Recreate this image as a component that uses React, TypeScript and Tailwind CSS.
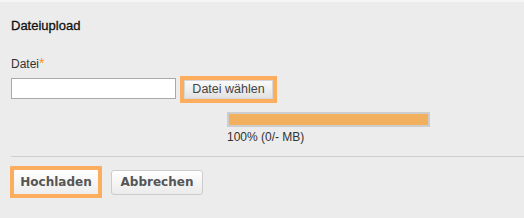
import React from "react";

export default function App() {
  return (
    <div className="w-[524px] h-[218px] bg-[#ececec] overflow-hidden font-['Liberation_Sans',Arial,sans-serif] text-[#333]">
      <div className="h-[2px] bg-[#f5f5f5]" />
      <div className="pl-[11px] pt-[17px]">
        <h2 className="text-[13px] leading-[14px] text-[#111] [-webkit-text-stroke:0.3px_#111]">Dateiupload</h2>
        <div className="mt-[24px] text-[12px] leading-[14px] text-[#333] flex items-start">
          <span>Datei</span>
          <span className="text-[#f7941d] text-[14px] leading-[12px]">*</span>
        </div>
        <div className="mt-[5px] flex items-start">
          <input
            type="text"
            className="mt-[2px] w-[165px] h-[21px] border border-[#a9a9a9] bg-white outline-none"
          />
          <div className="ml-[4px] border-[4px] border-[#fdad5e]">
            <button className="block w-[89px] h-[19px] border border-[#d6d6d6] bg-gradient-to-b from-[#fafafa] to-[#e2e2e2] text-[12.5px] leading-[17px] text-[#444]">
              Datei wählen
            </button>
          </div>
        </div>
        <div className="mt-[9px] ml-[216px] w-[203px] h-[15px] border-[2px] border-[#cdcdcd] bg-[#f2b05f]" />
        <div className="mt-[3px] ml-[216px] text-[12px] leading-[14px] text-[#333]">100% (0/- MB)</div>
      </div>
      <div className="mt-[12px] ml-[11px] h-px bg-[#cfcfcf]" />
      <div className="mt-[9px] ml-[10px] flex items-center">
        <div className="border-[4px] border-[#fdad5e]">
          <button className="block w-[84px] h-[24px] bg-gradient-to-b from-[#ffffff] to-[#ededed] font-['DejaVu_Sans',Verdana,sans-serif] font-bold text-[12px] leading-[24px] text-[#555]">
            Hochladen
          </button>
        </div>
        <button className="ml-[9px] w-[92px] h-[25px] rounded-[3px] border border-[#cccccc] bg-gradient-to-b from-[#ffffff] to-[#ebebeb] font-['DejaVu_Sans',Verdana,sans-serif] font-bold text-[12px] leading-[23px] text-[#555]">
          Abbrechen
        </button>
      </div>
    </div>
  );
}
